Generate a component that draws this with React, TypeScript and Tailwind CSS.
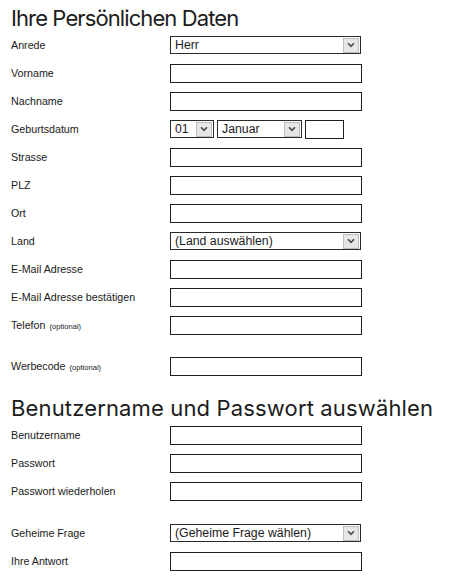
import React from 'react';

const Chevron: React.FC = () => (
    <svg width="8" height="6" viewBox="0 0 8 6" className="block">
        <path d="M1 1.2 L4 4.4 L7 1.2" fill="none" stroke="#4a4a4a" strokeWidth="1.6" />
    </svg>
);

const FakeSelect: React.FC<{ value: string; width: string }> = ({ value, width }) => (
    <div className={`${width} h-[18px] border border-[#2a2a2a] bg-white flex items-center justify-between pl-[4px] pr-px`}>
        <span className="text-[12.3px] text-[#1a1a1a] leading-none whitespace-nowrap">{value}</span>
        <span className="w-[16px] h-[15px] bg-[#e6e6e6] border border-[#bdbdbd] flex items-center justify-center shrink-0">
            <Chevron />
        </span>
    </div>
);

const TextInput: React.FC<{ width?: string }> = ({ width = 'w-[192px]' }) => (
    <input type="text" className={`${width} h-[19px] border border-[#1e1e1e] bg-white outline-none`} />
);

const Row: React.FC<{ label: string; optional?: boolean; extra?: string; children: React.ReactNode }> = ({ label, optional, extra = '', children }) => (
    <div className={`flex items-center h-[28px] ${extra}`}>
        <label className="w-[159px] shrink-0 text-[10.7px] text-[#1a1a1a]">
            {label}
            {optional && <span className="text-[7.6px] ml-[4px]">(optional)</span>}
        </label>
        {children}
    </div>
);

const App: React.FC = () => {
    return (
        <div className="w-[467px] h-[584px] bg-white pl-[11px] pt-[6px] overflow-hidden" style={{ fontFamily: '"Liberation Sans", Arial, sans-serif' }}>
            {/* section headings */}
            <h1 className="text-[22px] leading-[25px] tracking-[-0.9px] text-[#1c1c1c] whitespace-nowrap" style={{ fontFamily: 'Inter, sans-serif' }}>
                Ihre Persönlichen Daten
            </h1>
            <Row label="Anrede"><FakeSelect value="Herr" width="w-[191px]" /></Row>
            <Row label="Vorname"><TextInput /></Row>
            <Row label="Nachname"><TextInput /></Row>
            <Row label="Geburtsdatum">
                <div className="flex items-center gap-[3px]">
                    <FakeSelect value="01" width="w-[44px]" />
                    <FakeSelect value="Januar" width="w-[85px]" />
                    <TextInput width="w-[39px]" />
                </div>
            </Row>
            <Row label="Strasse"><TextInput /></Row>
            <Row label="PLZ"><TextInput /></Row>
            <Row label="Ort"><TextInput /></Row>
            <Row label="Land"><FakeSelect value="(Land auswählen)" width="w-[191px]" /></Row>
            <Row label="E-Mail Adresse"><TextInput /></Row>
            <Row label="E-Mail Adresse bestätigen"><TextInput /></Row>
            <Row label="Telefon" optional><TextInput /></Row>
            <Row label="Werbecode" optional extra="mt-[13px]"><TextInput /></Row>

            <h2 className="mt-[16px] text-[22px] leading-[25px] tracking-[0.15px] text-[#1c1c1c] whitespace-nowrap" style={{ fontFamily: 'Inter, sans-serif' }}>
                Benutzername und Passwort auswählen
            </h2>
            <Row label="Benutzername"><TextInput /></Row>
            <Row label="Passwort"><TextInput /></Row>
            <Row label="Passwort wiederholen"><TextInput /></Row>
            <Row label="Geheime Frage" extra="mt-[14px]"><FakeSelect value="(Geheime Frage wählen)" width="w-[191px]" /></Row>
            <Row label="Ihre Antwort"><TextInput /></Row>
        </div>
    );
};

export default App;
